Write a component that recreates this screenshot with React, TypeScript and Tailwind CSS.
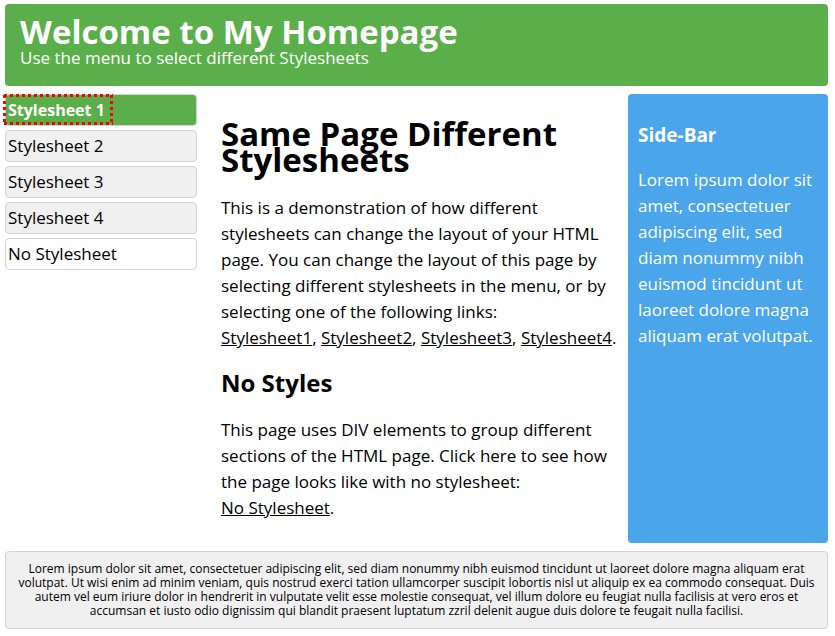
import React from "react";

const menu = ["Stylesheet 2", "Stylesheet 3", "Stylesheet 4"];
const inlineLinks = ["Stylesheet1", "Stylesheet2", "Stylesheet3", "Stylesheet4"];

const item = "flex h-8 items-center rounded border border-[#d4d4d4] px-[2px]";

export default function App() {
  return (
    <div className="flex flex-col gap-2 bg-white pt-1 pr-[7px] pb-[7px] pl-[5px] font-['Open_Sans',sans-serif] text-[17px] text-black">
      <header className="rounded bg-[#5baf4a] px-[15px] pt-3 pb-4 text-white">
        <h1 className="text-[33px] leading-8 font-bold">Welcome to My Homepage</h1>
        <p className="pb-[2px] leading-5">Use the menu to select different Stylesheets</p>
      </header>

      <div className="flex">
        <nav className="flex w-48 shrink-0 flex-col gap-1">
          <a href="#1" className={item + " relative bg-[#5baf4a] text-base font-bold text-white"}>
            Stylesheet 1
            <svg className="absolute -top-px -left-[3px] h-[31px] w-[110px]" viewBox="0 0 110 31" fill="none" shapeRendering="crispEdges" aria-hidden="true">
              <path d="M1 1.5H110M1 29.5H110M1.5 1V31M108.5 1V31" stroke="#ff0000" strokeWidth="3" strokeDasharray="3 3" />
            </svg>
          </a>
          {menu.map((m) => (
            <a key={m} href="#s" className={item + " bg-[#f0f0f0]"}>{m}</a>
          ))}
          <a href="#none" className={item + " bg-white"}>No Stylesheet</a>
        </nav>

        <main className="min-w-0 flex-1 pt-[27px] pl-6 leading-[26px]">
          <h2 className="text-[33px] leading-[26px] font-bold">Same Page Different<br />Stylesheets</h2>
          <p className="mt-[22px] whitespace-nowrap">
            This is a demonstration of how different<br />
            stylesheets can change the layout of your HTML<br />
            page. You can change the layout of this page by<br />
            selecting different stylesheets in the menu, or by<br />
            selecting one of the following links:<br />
            {inlineLinks.map((l, i) => (
              <React.Fragment key={l}>
                <a href="#s" className="underline">{l}</a>{i < 3 ? ", " : "."}
              </React.Fragment>
            ))}
          </p>
          <h3 className="mt-[19px] text-2xl leading-[26px] font-bold">No Styles</h3>
          <p className="mt-[21px] whitespace-nowrap">
            This page uses DIV elements to group different<br />
            sections of the HTML page. Click here to see how<br />
            the page looks like with no stylesheet:<br />
            <a href="#none" className="underline">No Stylesheet</a>.
          </p>
        </main>

        <aside className="w-[200px] shrink-0 rounded bg-[#4aa5eb] px-[10px] pt-7 pb-[194px] leading-[26px] text-white">
          <h3 className="text-[19px] leading-[26px] font-bold">Side-Bar</h3>
          <p className="mt-[19px] whitespace-nowrap">
            Lorem ipsum dolor sit<br />
            amet, consectetuer<br />
            adipiscing elit, sed<br />
            diam nonummy nibh<br />
            euismod tincidunt ut<br />
            laoreet dolore magna<br />
            aliquam erat volutpat.
          </p>
        </aside>
      </div>

      <footer className="rounded border border-[#d4d4d4] bg-[#f0f0f0] py-[10px] text-center text-xs leading-[14px] whitespace-nowrap">
        Lorem ipsum dolor sit amet, consectetuer adipiscing elit, sed diam nonummy nibh euismod tincidunt ut laoreet dolore magna aliquam erat<br />
        volutpat. Ut wisi enim ad minim veniam, quis nostrud exerci tation ullamcorper suscipit lobortis nisl ut aliquip ex ea commodo consequat. Duis<br />
        autem vel eum iriure dolor in hendrerit in vulputate velit esse molestie consequat, vel illum dolore eu feugiat nulla facilisis at vero eros et<br />
        accumsan et iusto odio dignissim qui blandit praesent luptatum zzril delenit augue duis dolore te feugait nulla facilisi.
      </footer>
    </div>
  );
}
